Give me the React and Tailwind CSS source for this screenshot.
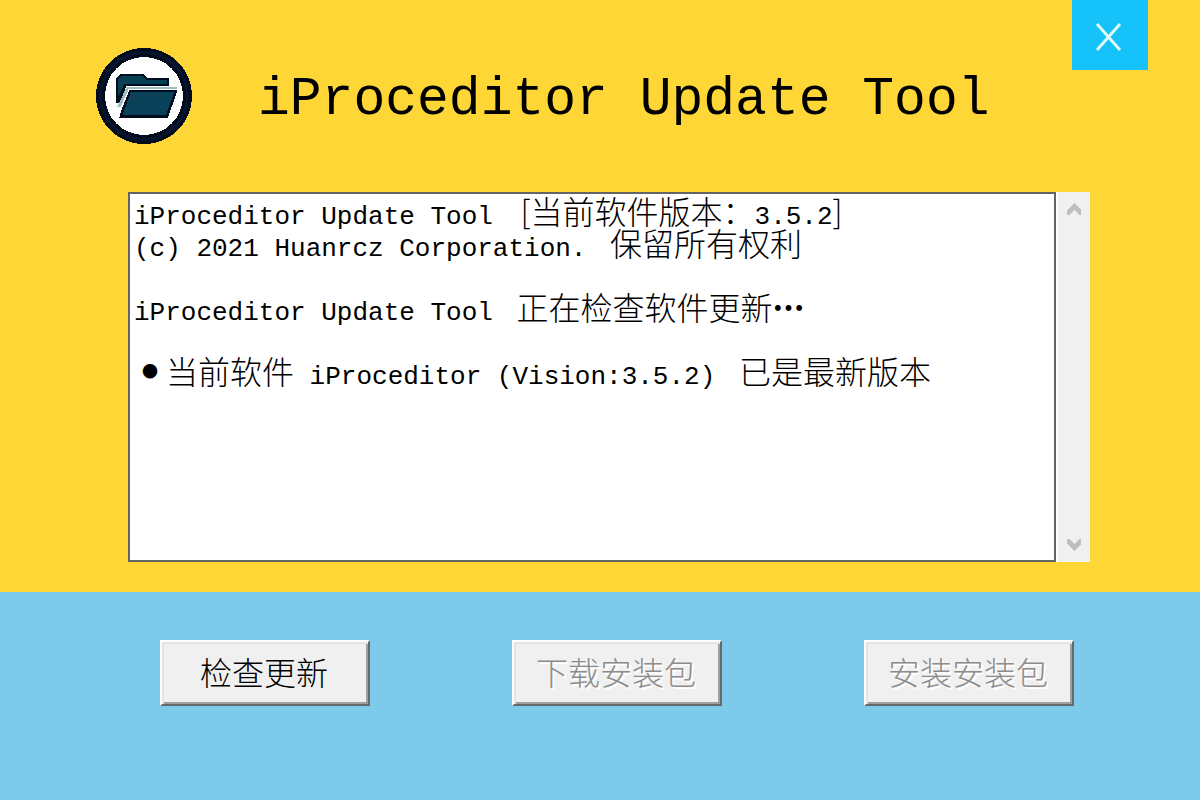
import React from "react";

function Logo() {
  return (
    <svg viewBox="36 36 288 288" className="size-24 shrink-0" shapeRendering="crispEdges" aria-hidden="true">
      <circle cx="180" cy="180" r="144" fill="#020a1c" />
      <circle cx="180" cy="180" r="130" fill="none" stroke="#06152e" strokeWidth="8" />
      <circle cx="180" cy="180" r="117" fill="#ffffff" />
      <path d="M97 202V128L110 114H178L190 127H255V151H126L118 178L106 202Z" fill="#000d20" />
      <path d="M103 182V130L112 120H176L187 133H248V145H120Z" fill="#064052" />
      <path d="M128 152H278V159H134L110 212H100Z" fill="#9fbcbf" />
      <path d="M137 161H281L252 245H106L112 222Z" fill="#000d20" />
      <path d="M141 168H271L246 238H115Z" fill="#0a4058" />
    </svg>
  );
}

function Cjk({ children, className = "" }) {
  return (
    <span className={`font-['Noto_Sans_CJK_SC',sans-serif] text-[32px] font-light ${className}`}>
      {children}
    </span>
  );
}

function ScrollButton({ label, points }) {
  return (
    <button type="button" aria-label={label} className="flex h-[34px] w-full items-center justify-center">
      <svg viewBox="0 0 14 12" className="h-3 w-3.5" shapeRendering="crispEdges" aria-hidden="true">
        <polygon points={points} fill="#bfbfbf" />
      </svg>
    </button>
  );
}

function ActionButton({ children, disabled }) {
  return (
    <button
      type="button"
      disabled={disabled}
      className="h-[66px] w-[210px] shrink-0 border-2 border-t-white border-r-[#696969] border-b-[#696969] border-l-white bg-[#f0f0f0] pr-0.5 pb-1 font-['Noto_Sans_CJK_SC',sans-serif] text-[32px] leading-8 font-light whitespace-nowrap text-black shadow-[inset_2px_2px_0_#e3e3e3,inset_-2px_-2px_0_#a0a0a0] disabled:text-[#8c8c8c] disabled:[text-shadow:2px_2px_0_#ffffff]"
    >
      {children}
    </button>
  );
}

export default function App() {
  return (
    <main className="flex min-h-screen flex-col bg-[#7dcbeb] text-black">
      <section className="bg-[#fed736] pb-[30px]">
        <header className="flex pr-[52px] pl-24">
          <div className="flex flex-1 items-center gap-[66px] pt-12 pb-12">
            <Logo />
            <h1 className="pt-2 font-['Liberation_Mono',monospace] text-[53px] leading-[64px] whitespace-nowrap">
              iProceditor Update Tool
            </h1>
          </div>
          <button type="button" aria-label="关闭" className="h-[70px] w-[76px] shrink-0 bg-[#16c2fa]">
            <svg viewBox="0 0 76 70" className="h-full w-full" aria-hidden="true">
              <path d="M25 24L48 50M48 24L25 50" fill="none" stroke="#e2fbf6" strokeWidth="2.8" />
            </svg>
          </button>
        </header>
        <div className="flex min-h-[370px] pr-[110px] pl-32">
          <div
            role="log"
            aria-label="更新日志"
            className="flex-1 border-2 border-[#646464] bg-white px-1 font-['Liberation_Mono',monospace] text-[26px] leading-8 whitespace-pre"
          >
            <p className="h-8">iProceditor Update Tool <Cjk className="ml-3">[当前软件版本：</Cjk>3.5.2<Cjk>]</Cjk></p>
            <p className="h-8">(c) 2021 Huanrcz Corporation. <Cjk className="ml-2">保留所有权利</Cjk></p>
            <p className="h-8" />
            <p className="h-8">iProceditor Update Tool <Cjk className="ml-2">正在检查软件更新<b className="font-black">…</b></Cjk></p>
            <p className="h-8" />
            <p className="h-8"><span className="inline-block w-8 text-center align-top font-['Noto_Sans_CJK_SC',sans-serif] text-[16px]">●</span><Cjk>当前软件</Cjk> iProceditor (Vision:3.5.2) <Cjk className="ml-2">已是最新版本</Cjk></p>
          </div>
          <div className="flex w-[34px] flex-col justify-between border-l-2 border-white bg-[#f0f0f0]">
            <ScrollButton label="向上滚动" points="7,0 14,7 14,12 12,12 7,7 2,12 0,12 0,7" />
            <ScrollButton label="向下滚动" points="7,12 14,5 14,0 12,0 7,5 2,0 0,0 0,5" />
          </div>
        </div>
      </section>
      <section className="flex justify-between gap-4 pt-12 pr-[126px] pb-12 pl-40">
        <ActionButton>检查更新</ActionButton>
        <ActionButton disabled>下载安装包</ActionButton>
        <ActionButton disabled>安装安装包</ActionButton>
      </section>
    </main>
  );
}
